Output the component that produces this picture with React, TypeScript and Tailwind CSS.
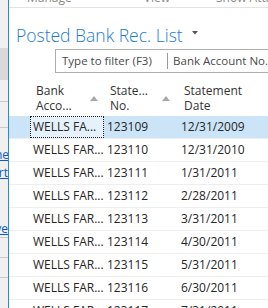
import React from 'react';

type Rec = {
  bank: string;
  no: string;
  date: string;
};

const recs: Rec[] = [
  { bank: 'WELLS FA...', no: '123109', date: '12/31/2009' },
  { bank: 'WELLS FAR...', no: '123110', date: '12/31/2010' },
  { bank: 'WELLS FAR...', no: '123111', date: '1/31/2011' },
  { bank: 'WELLS FAR...', no: '123112', date: '2/28/2011' },
  { bank: 'WELLS FAR...', no: '123113', date: '3/31/2011' },
  { bank: 'WELLS FAR...', no: '123114', date: '4/30/2011' },
  { bank: 'WELLS FAR...', no: '123115', date: '5/31/2011' },
  { bank: 'WELLS FAR...', no: '123116', date: '6/30/2011' },
  { bank: 'WELLS FAR...', no: '123117', date: '7/31/2011' },
];

function SortArrow() {
  return (
    <svg width="8" height="5" viewBox="0 0 8 5" className="mt-[13px]">
      <path d="M0 5 L4 0 L8 5 Z" fill="#a9a9a9" />
    </svg>
  );
}

// background window peeking out on the left
function SideStrip() {
  return (
    <div className="w-[8px] shrink-0 flex flex-col bg-[#f0f0f0] text-[12px] leading-[14px] text-[#0b57d0] overflow-hidden">
      <div className="h-[48px]" />
      <div className="h-[32px] bg-[#d9d9d9]" />
      <div className="h-[22px] border-b border-[#c9c9c9]" />
      <div className="h-[26px] border-b border-[#c9c9c9]" />
      <div className="h-[20px]" />
      <div className="h-[18px] flex justify-end"><span className="underline -mr-px">ne</span></div>
      <div className="h-[20px] flex justify-end"><span className="underline">rt</span></div>
      <div className="h-[36px]" />
      <div className="h-[16px] flex justify-end border-b border-[#c9c9c9]"><span className="underline">ve</span></div>
      <div className="h-[20px] border-b border-[#c9c9c9]" />
      <div className="h-[20px] border-b border-[#c9c9c9]" />
    </div>
  );
}

export default function App() {
  return (
    <div className="w-[268px] h-[308px] overflow-hidden flex bg-white font-['Open_Sans',sans-serif]">
      <SideStrip />
      <div className="w-px shrink-0 bg-[#2b88d8]" />
      <div className="flex-1 min-w-0 flex flex-col overflow-hidden">
        {/* ribbon, mostly scrolled away */}
        <div className="h-[8px] shrink-0 border-b border-[#e3e3e3] overflow-hidden relative">
          <div className="flex items-start text-[12px] leading-[12px] text-[#8a8a8a] mt-[-8px] whitespace-nowrap">
            <span className="ml-[18px]">Manage</span>
            <span className="ml-[29px] mt-[7px] w-[4px] h-px bg-[#999]" />
            <span className="ml-[43px]">View</span>
            <span className="ml-[40px] mt-[7px] w-[4px] h-px bg-[#999]" />
            <span className="ml-[6px]">Show Attachments</span>
          </div>
        </div>

        {/* title */}
        <div className="h-[41px] shrink-0 flex items-end pl-[7px] pb-[2px]">
          <span className="text-[17.5px] leading-[24px] font-light text-[#1c7bd4] whitespace-nowrap">
            Posted Bank Rec. List
          </span>
          <svg width="6" height="4" viewBox="0 0 6 4" className="ml-[9px] mb-[12px]">
            <path d="M0 0 L6 0 L3 3.5 Z" fill="#555" />
          </svg>
        </div>

        {/* filter */}
        <div className="h-[24px] shrink-0 ml-[46px] -mr-px border border-[#adadad] flex items-center text-[11.5px] text-[#4a4a4a] whitespace-nowrap">
          <span className="pl-[6px] w-[122px]">Type to filter (F3)</span>
          <span className="w-px h-[16px] bg-[#9a9a9a]" />
          <span className="pl-[5px]">Bank Account No.</span>
        </div>

        {/* column headers */}
        <div className="h-[43px] shrink-0 flex pl-[21px] text-[12px] leading-[15px] text-[#333]">
          <div className="w-[74px] flex pl-[6px] pt-[10px]">
            <div className="w-[54px]">
              Bank
              <br />
              Acco...
            </div>
            <SortArrow />
          </div>
          <div className="w-[74px] flex pl-[6px] pt-[10px]">
            <div className="w-[52px]">
              State...
              <br />
              No.
            </div>
            <SortArrow />
          </div>
          <div className="flex-1 pl-[6px] pt-[10px] whitespace-nowrap">
            Statement
            <br />
            Date
          </div>
        </div>

        {/* rows */}
        <div className="flex flex-col text-[12px] text-[#262626]">
          {recs.map((r, i) => (
            <div
              key={r.no}
              className={
                i === 0
                  ? 'h-[22px] shrink-0 flex items-stretch bg-[#cce4f7] pl-[21px]'
                  : 'h-[23px] shrink-0 flex items-center border-t border-[#eeeeee] pl-[21px]'
              }
            >
              {i === 0 ? (
                <div className="w-[74px] flex items-center pl-[2px] bg-[#e5f1fb] border border-dotted border-[#222] whitespace-nowrap">
                  {r.bank}
                </div>
              ) : (
                <div className="w-[74px] pl-[3px] whitespace-nowrap">{r.bank}</div>
              )}
              <div className="w-[74px] flex items-center pl-[3px]">{r.no}</div>
              <div className="flex-1 flex items-center pl-[3px]">{r.date}</div>
            </div>
          ))}
        </div>
      </div>
    </div>
  );
}
